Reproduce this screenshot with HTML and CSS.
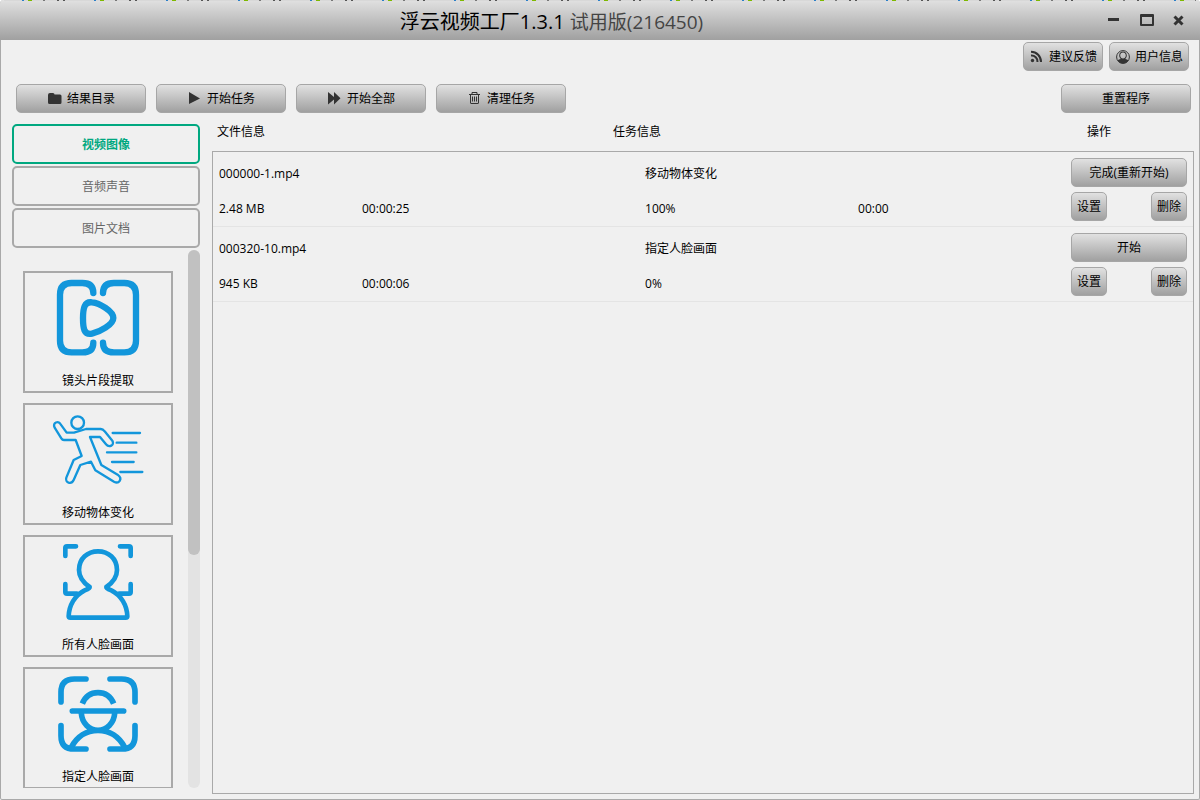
FILE: index.html
```html
<!DOCTYPE html>
<html lang="zh-CN">
<head>
<meta charset="utf-8">
<title>浮云视频工厂1.3.1</title>
<link rel="stylesheet" href="styles.css">
</head>
<body>
<div class="window">
  <header class="titlebar">
    <h1 class="title">浮云视频工厂1.3.1 <small class="edition">试用版(216450)</small></h1>
    <div class="controls">
      <button class="control" aria-label="最小化"><svg width="16" height="16" viewBox="0 0 16 16"><path d="M1 6h11v3H1z"/></svg></button>
      <button class="control" aria-label="最大化"><svg width="16" height="16" viewBox="0 0 16 16"><path fill-rule="evenodd" d="M1 3q0-1 1-1h12q1 0 1 1v10q0 1-1 1H2q-1 0-1-1zM3 5v7h10V5z"/></svg></button>
      <button class="control" aria-label="关闭"><svg width="16" height="16" viewBox="0 0 16 16"><path class="cross" d="M3.500 4.500l8 8M11.500 4.500l-8 8"/></svg></button>
    </div>
  </header>

  <div class="account">
    <button class="btn btn-account"><svg width="16" height="16" viewBox="0 0 16 16"><circle cx="3.500" cy="11.500" r="1.700"/><path class="line" d="M2 6.500a6 6 0 0 1 6.500 6.500M2 2.800a10 10 0 0 1 10 10.200"/></svg>建议反馈</button>
    <button class="btn btn-account"><svg width="16" height="16" viewBox="0 0 16 16"><circle class="ring" cx="8" cy="8" r="6.400"/><path fill-rule="evenodd" d="M2.500 11.500c.8-.9 2-1.300 3.300-1.600C4.800 9 4.200 7.800 4.200 6.500 4.200 4.200 5.800 2.600 8 2.600s3.800 1.600 3.800 3.900c0 1.300-.6 2.500-1.600 3.400 1.300.3 2.500.7 3.300 1.600-1.200 1.900-3.200 3-5.500 3s-4.300-1.100-5.500-3zM8 3.600c-1.600 0-2.800 1.200-2.800 2.900S6.500 9.600 8 9.600s2.800-1.400 2.800-3.100S9.600 3.600 8 3.600z"/></svg>用户信息</button>
  </div>

  <div class="toolbar">
    <button class="btn btn-wide"><svg width="16" height="16" viewBox="0 0 16 16"><path d="M1 4q0-2 2-2h3q1.500 0 1.500 1.500H13q1.500 0 1.500 1.500v6.500q0 1.500-1.500 1.500H2.500Q1 13 1 11.500z"/></svg>结果目录</button>
    <button class="btn btn-wide"><svg width="16" height="16" viewBox="0 0 16 16"><path d="M2 1l11 6.500L2 13z"/></svg>开始任务</button>
    <button class="btn btn-wide"><svg width="16" height="16" viewBox="0 0 16 16"><path d="M1 1l6 5V1l6.500 6.300L7 13.500v-5l-6 5z"/></svg>开始全部</button>
    <button class="btn btn-wide"><svg width="16" height="16" viewBox="0 0 16 16"><path class="thin" d="M2 3.500h11M5 3V1.500h5V3M3.500 4v8q0 .5.500.5h7q.5 0 .5-.5V4M5.500 5.500v5M7.500 5.500v5M9.500 5.500v5"/></svg>清理任务</button>
    <button class="btn btn-wide btn-reset">重置程序</button>
  </div>

  <main class="workspace">
    <aside class="sidebar">
      <nav class="tabs">
        <button class="tab tab-active">视频图像</button>
        <button class="tab">音频声音</button>
        <button class="tab">图片文档</button>
      </nav>
      <div class="tools">
        <div class="tool-list">
          <button class="tool">
            <svg class="tool-icon" viewBox="45 42 438 294"><g stroke-width="19"><path d="M250 99Q250 69 217 69H185Q150 69 150 104V242Q150 277 185 277H217Q250 277 250 248"/><path d="M279 99Q279 69 312 69H343Q378 69 378 104V242Q378 277 343 277H312Q279 277 279 248"/><path d="M246 127C223 124 219 145 219 175C219 205 222 226 246 221C269 216 310 194 310 174C310 154 269 129 246 127Z"/></g></svg>
            镜头片段提取
          </button>
          <button class="tool">
            <svg class="tool-icon" viewBox="45 30 438 294"><g stroke-width="7"><circle cx="203" cy="80" r="19"/><path d="M228 99H272Q279 99 284 106L307 134C315 148 297 156 288 145L270 123H240L274 207L323 236C340 249 326 265 312 257L256 223L243 197L211 207L191 252C184 267 164 260 169 245L191 192L215 180L197 132H162Q157 132 154 127L134 95C126 79 146 73 152 85L170 110H192Z"/><path d="M308 111H390M320 140H379M291 169H379M306 198H371M331 228H397"/></g></svg>
            移动物体变化
          </button>
          <button class="tool">
            <svg class="tool-icon" viewBox="45 30 438 294"><g stroke-width="14"><path d="M166 84V60Q166 55 171 55H198M330 55H357Q362 55 362 60V84M166 168V192Q166 197 171 197H201M327 197H357Q362 197 362 192V168"/><path d="M239 177C220 164 207 149 207 126C207 91 233 70 264 70C295 70 321 91 321 126C321 149 308 164 289 177Q288 181 304 187C334 202 351 232 352 265Q352 269 347 269H181Q176 269 176 265C177 232 194 202 224 187Q240 181 239 177Z"/></g></svg>
            所有人脸画面
          </button>
          <button class="tool">
            <svg class="tool-icon" viewBox="45 30 438 294"><g stroke-width="17"><path d="M153 126V97Q153 57 193 57H228M300 57H335Q375 57 375 97V126M153 197V227Q153 267 193 267H228M300 267H335Q375 267 375 227V197M187 153H341"/><path d="M214 160C216 189 238 211 264 211C290 211 312 189 314 160M184 262C201 229 231 211 264 211C297 211 327 229 344 262"/><path stroke-linecap="butt" d="M217 131C226 109 243 98 264 98C285 98 302 109 311 131"/></g></svg>
            指定人脸画面
          </button>
        </div>
        <div class="scroll-track"><div class="scroll-thumb"></div></div>
      </div>
    </aside>

    <section class="tasks">
      <div class="headings"><span>文件信息</span><span>任务信息</span><span>操作</span></div>
      <div class="panel">
        <table class="task-table">
          <colgroup><col class="col-size"><col class="col-length"><col class="col-progress"><col><col class="col-actions"></colgroup>
          <tbody class="task">
            <tr class="task-top"><td colspan="2">000000-1.mp4</td><td colspan="2">移动物体变化</td>
              <td rowspan="2"><div class="actions"><button class="btn btn-run">完成(重新开始)</button><button class="btn btn-small">设置</button><button class="btn btn-small">删除</button></div></td></tr>
            <tr class="task-bottom"><td>2.48 MB</td><td>00:00:25</td><td>100%</td><td>00:00</td></tr>
          </tbody>
          <tbody class="task">
            <tr class="task-top"><td colspan="2">000320-10.mp4</td><td colspan="2">指定人脸画面</td>
              <td rowspan="2"><div class="actions"><button class="btn btn-run">开始</button><button class="btn btn-small">设置</button><button class="btn btn-small">删除</button></div></td></tr>
            <tr class="task-bottom"><td>945 KB</td><td>00:00:06</td><td>0%</td><td></td></tr>
          </tbody>
        </table>
      </div>
    </section>
  </main>
</div>
</body>
</html>
```
FILE: styles.css
```css
* { box-sizing: border-box; }
body { margin: 0; background: #fff; }
body, button { font-family: "Open Sans", "Noto Sans CJK SC", sans-serif; font-size: 12px; line-height: 18px; color: #000; }
button { margin: 0; padding: 0; cursor: pointer; }

.window {
  display: flex;
  flex-direction: column;
  height: 100vh;
  background: #f0f0f0;
  border: 1px solid #a9a9a9;
  border-top: 0;
  border-radius: 4px 4px 2px 2px;
}

.titlebar {
  position: relative;
  flex: none;
  display: flex;
  align-items: center;
  justify-content: center;
  height: 40px;
  margin: 0 -1px;
  border-radius: 4px 4px 0 0;
  background: linear-gradient(#e1e1e1, #a0a0a0);
}
/* sliver of the desktop showing along the top edge */
.titlebar::before {
  content: "";
  position: absolute;
  inset: 0 4px auto;
  height: 1px;
  background: repeating-linear-gradient(90deg, #d8d8d8 0 18px, #2a7fc8 18px 20px, #d8d8d8 20px 24px, #7db800 24px 28px, #d8d8d8 28px 39px, #777 39px 41px, #d8d8d8 41px 53px, #555 53px 55px, #d8d8d8 55px 59px, #555 59px 61px, #d8d8d8 61px 72px);
}
.title { margin: 0; padding: 3px 97px 0 0; font-size: 20px; font-weight: 400; line-height: 40px; }
.edition { font-size: 19px; color: #444; }
.controls { position: absolute; top: 12px; right: 13px; display: flex; gap: 16px; }
.control { display: block; width: 16px; height: 16px; border: 0; background: none; }
svg { display: block; flex: none; fill: #333; }
.cross { fill: none; stroke: #333; stroke-width: 3; }
.line { fill: none; stroke: #333; stroke-width: 2; }
.ring, .thin { fill: none; stroke: #333; stroke-width: 1; }

.btn {
  display: flex;
  align-items: center;
  justify-content: center;
  gap: 4px;
  height: 29px;
  border: 1px solid #a6a6a6;
  border-radius: 5px;
  background: linear-gradient(#e1e1e1, #a0a0a0);
}
.account { display: flex; justify-content: flex-end; gap: 6px; padding: 2px 10px 0; }
.btn-account { width: 80px; }
.toolbar { display: flex; gap: 10px; padding: 13px 8px 0 15px; }
.btn-wide { width: 130px; }
.btn-reset { margin-left: auto; }

.workspace { flex: 1; display: flex; gap: 12px; min-height: 0; padding: 11px 5px 5px 11px; }
.sidebar { flex: none; display: flex; flex-direction: column; width: 188px; padding-bottom: 6px; }
.tabs { display: grid; gap: 2px; }
.tab { height: 40px; padding-top: 2px; border: 2px solid #a9a9a9; border-radius: 5px; background: none; color: #666; }
.tab-active { border-color: #00a880; color: #00a880; font-weight: 700; }
.tools { flex: 1; display: flex; justify-content: space-between; min-height: 0; margin-top: 2px; }
.tool-list { display: flex; flex-direction: column; gap: 10px; padding: 21px 0 0 11px; overflow: hidden; }
.tool { flex: none; display: block; width: 150px; height: 122px; border: 2px solid #a9a9a9; background: none; }
.tool-icon { width: 100%; height: 98px; fill: none; stroke: #1296db; stroke-linecap: round; stroke-linejoin: round; }
.scroll-track { width: 12px; border-radius: 6px; background: #e3e3e3; }
.scroll-thumb { height: 305px; border-radius: 6px; background: #c1c1c1; }

.tasks { flex: 1; display: flex; flex-direction: column; min-width: 0; }
.headings { display: grid; grid-template-columns: 396fr 474fr 107px; height: 27px; padding: 0 0 0 5px; line-height: 16px; }
.panel { flex: 1; border: 1px solid #a9a9a9; }
.task-table { width: 100%; table-layout: fixed; border-collapse: separate; border-spacing: 0; }
.col-size { width: 143px; }
.col-length { width: 283px; }
.col-progress { width: 213px; }
.col-actions { width: 128px; }
td { padding: 0 6px; }
.task-top { height: 40px; }
.task-bottom { height: 35px; }
.task-top td { padding-top: 4px; }
.task-bottom td, .task-top td[rowspan] { border-bottom: 1px solid #e4e4e4; }
.task-top td[rowspan] { padding-top: 1px; }
.actions { display: flex; flex-wrap: wrap; justify-content: space-between; gap: 5px 0; }
.btn-run { width: 100%; }
.btn-small { width: 36px; }
```
